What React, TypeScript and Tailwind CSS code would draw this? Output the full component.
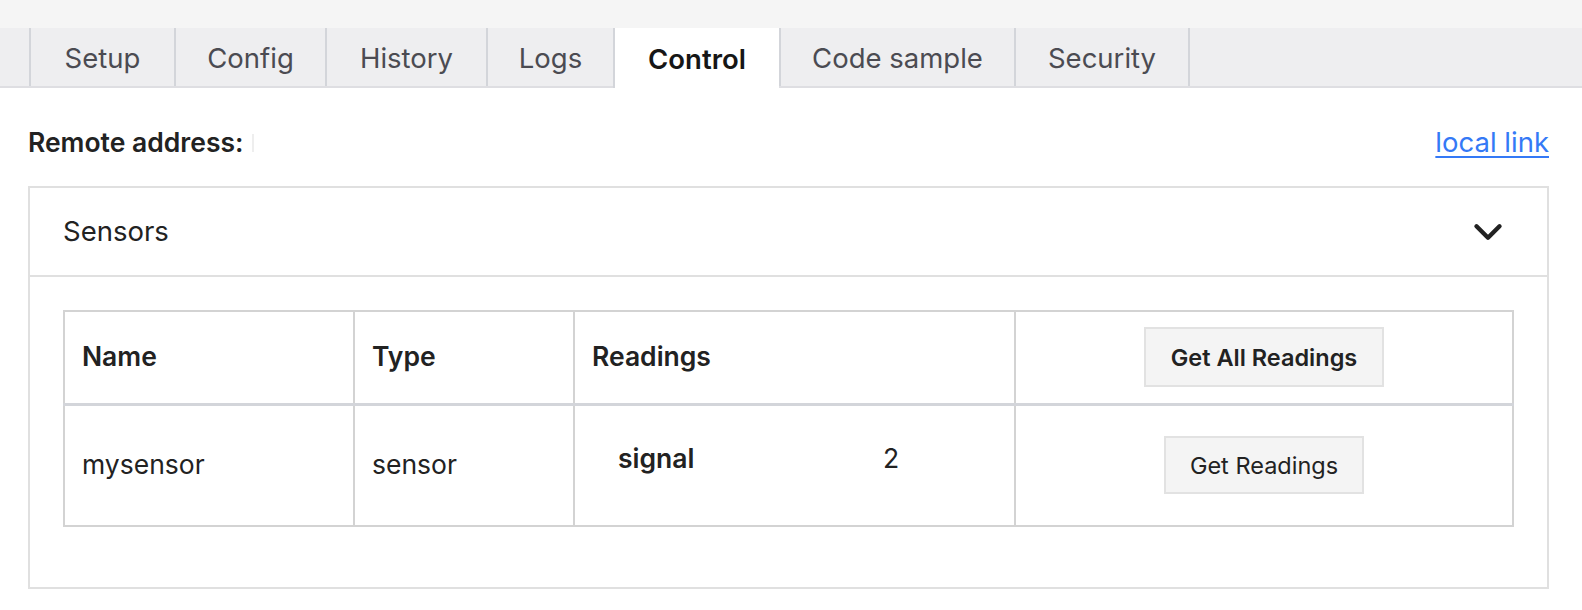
import { ChevronDown } from "lucide-react";

const TABS = [
  { label: "Setup", w: "w-[145px]" },
  { label: "Config", w: "w-[151px]" },
  { label: "History", w: "w-[161px]" },
  { label: "Logs", w: "w-[127px]" },
  { label: "Control", w: "w-[166px]", active: true },
  { label: "Code sample", w: "w-[235px]" },
  { label: "Security", w: "w-[176px]" },
];

export default function App() {
  return (
    <div className="min-h-[610px] bg-white font-['Inter',sans-serif] text-[#222]">
      <div className="h-[28px] bg-[#f5f5f5]" />

      <div className="flex h-[60px] bg-[#eeeef0] pl-[29px] border-b-2 border-[#dedee2]">
        {TABS.map((t) => (
          <div
            key={t.label}
            className={
              t.active
                ? `${t.w} -mb-[2px] flex items-center justify-center border-l-2 border-[#d3d5da] bg-white pt-[4px] text-[27.5px] font-semibold text-[#161616]`
                : `${t.w} flex items-center justify-center border-l-2 border-[#d3d5da] pt-[4px] text-[27.5px] text-[#4b4b52] last:border-r-2`
            }
          >
            {t.label}
          </div>
        ))}
      </div>

      <div className="pl-[28px] pr-[33px] pt-[35px]">
        <div className="flex items-center justify-between h-[40px]">
          <div className="flex items-center gap-[8px] text-[26.5px] font-semibold text-[#222]">
            Remote address:
            <span className="inline-block h-[18px] w-[2px] bg-[#eee]" />
          </div>
          <a href="#" className="text-[27.5px] text-[#3479f6] underline underline-offset-4 decoration-2">
            local link
          </a>
        </div>

        <div className="mt-[23px] border-2 border-[#e0e0e0]">
          <div className="flex h-[89px] items-center justify-between border-b-2 border-[#e0e0e0] pl-[33px] pr-[36px]">
            <span className="text-[27.5px] text-[#222]">Sensors</span>
            <ChevronDown size={46} strokeWidth={2.3} className="text-[#222]" />
          </div>

          <div className="px-[33px] pt-[33px] pb-[60px]">
            <table className="w-full border-collapse text-[26.5px]">
              <thead>
                <tr className="h-[93px] border-b-[3px] border-[#d3d5da]">
                  <th className="w-[290px] border-2 border-[#d3d3d3] pl-[17px] text-left font-semibold">Name</th>
                  <th className="w-[220px] border-2 border-[#d3d3d3] pl-[17px] text-left font-semibold">Type</th>
                  <th className="w-[441px] border-2 border-[#d3d3d3] pl-[17px] text-left font-semibold">Readings</th>
                  <th className="border-2 border-[#d3d3d3] text-center">
                    <button className="h-[60px] w-[240px] border-2 border-[#e2e2e2] bg-[#f4f4f4] text-[23.5px] font-semibold text-[#222]">
                      Get All Readings
                    </button>
                  </th>
                </tr>
              </thead>
              <tbody>
                <tr className="h-[122px]">
                  <td className="border-2 border-[#d3d3d3] pl-[17px]">mysensor</td>
                  <td className="border-2 border-[#d3d3d3] pl-[17px]">sensor</td>
                  <td className="border-2 border-[#d3d3d3] pl-[43px] align-top pt-[33px]">
                    <div className="flex">
                      <span className="w-[265px] font-semibold">signal</span>
                      <span>2</span>
                    </div>
                  </td>
                  <td className="border-2 border-[#d3d3d3] text-center">
                    <button className="h-[58px] w-[200px] border-2 border-[#e2e2e2] bg-[#f4f4f4] text-[23.5px] text-[#222]">
                      Get Readings
                    </button>
                  </td>
                </tr>
              </tbody>
            </table>
          </div>
        </div>
      </div>
    </div>
  );
}
